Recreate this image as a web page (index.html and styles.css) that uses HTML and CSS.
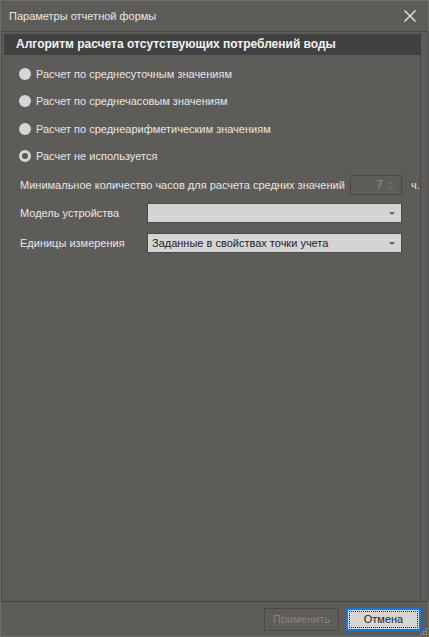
FILE: index.html
```html
<!DOCTYPE html>
<html lang="ru">
<head>
<meta charset="utf-8">
<title>Параметры отчетной формы</title>
<link rel="stylesheet" href="styles.css">
</head>
<body>
<div class="window">
  <div class="titlebar">
    <span class="title">Параметры отчетной формы</span>
    <svg class="close" width="12" height="12" viewBox="0 0 12 12"><path d="M0.5 0.5L11.5 11.5M11.5 0.5L0.5 11.5" stroke="#e8e8e8" stroke-width="1.3" fill="none"/></svg>
  </div>
  <div class="main">
    <div class="content">
      <div class="group">
        <div class="group-head">Алгоритм расчета отсутствующих потреблений воды</div>
        <div class="group-body">
          <label class="radio"><span class="dot"></span>Расчет по среднесуточным значениям</label>
          <label class="radio"><span class="dot"></span>Расчет по среднечасовым значениям</label>
          <label class="radio"><span class="dot"></span>Расчет по среднеарифметическим значениям</label>
          <label class="radio"><span class="dot checked"></span>Расчет не используется</label>
          <div class="row row-min">
            <span class="lbl lbl-min">Минимальное количество часов для расчета средних значений</span>
            <span class="spin"><span class="spin-val">7</span><span class="spin-arrows"><i class="up"></i><i class="down"></i></span></span>
            <span class="unit">ч.</span>
          </div>
          <div class="row">
            <span class="lbl lbl-w">Модель устройства</span>
            <span class="combo"><span class="combo-text"></span><i class="caret"></i></span>
          </div>
          <div class="row">
            <span class="lbl lbl-w">Единицы измерения</span>
            <span class="combo"><span class="combo-text">Заданные в свойствах точки учета</span><i class="caret"></i></span>
          </div>
        </div>
      </div>
    </div>
    <div class="side"></div>
  </div>
  <div class="footer">
    <button class="btn disabled">Применить</button>
    <button class="btn focused"><span class="focus">Отмена</span></button>
    <span class="grip"></span>
  </div>
</div>
</body>
</html>
```

FILE: styles.css
```css
* { box-sizing: border-box; }
html, body { margin: 0; padding: 0; }
body {
  width: 429px;
  height: 637px;
  background: #5e5c59;
  font-family: "Liberation Sans", Arial, sans-serif;
  font-size: 11px;
  color: #e6e6e6;
}
.window {
  width: 429px;
  height: 637px;
  display: flex;
  flex-direction: column;
  border: 1px solid #6f6d6a;
  background: #5e5c59;
}
.titlebar {
  height: 31px;
  flex: none;
  display: flex;
  align-items: center;
  justify-content: space-between;
  padding: 0 12px 0 8px;
  border-bottom: 1px solid #4a4947;
}
.title { color: #e8e8e8; font-size: 11px; }
.close { display: block; }
.main {
  flex: 1;
  display: flex;
  border-bottom: 1px solid #454442;
}
.content {
  flex: 1;
  padding: 2px 0 0 2px;
  border-left: 1px solid #484745;
  border-right: 1px solid #4a4947;
}
.side {
  width: 8px;
  flex: none;
  border-right: 1px solid #545351;
}
.group-head {
  height: 21px;
  background: #414141;
  color: #f2f2f2;
  font-weight: bold;
  font-size: 12px;
  line-height: 21px;
  padding-left: 12px;
  margin-right: -1px;
}
.group-body {
  padding: 5px 0 0 15px;
  display: flex;
  flex-direction: column;
}
.radio {
  height: 27.5px;
  display: flex;
  align-items: center;
  gap: 5px;
  color: #e6e6e6;
}
.dot {
  width: 12px;
  height: 12px;
  border-radius: 50%;
  background: #d6d6d6;
  flex: none;
}
.dot.checked {
  background: #5a5856;
  border: 3px solid #d6d6d6;
}
.row {
  height: 30px;
  display: flex;
  align-items: center;
  padding-left: 1px;
}
.row-min { margin-top: 2px; height: 26px; }
.lbl { color: #e6e6e6; white-space: nowrap; }
.lbl-min { width: 330px; }
.lbl-w { width: 127px; }
.spin {
  width: 52px;
  height: 20px;
  border: 1px solid #494846;
  display: flex;
  align-items: center;
  justify-content: flex-end;
}
.spin-val { color: #8c8c8c; font-size: 12px; margin-right: 5px; }
.spin-arrows {
  width: 10px;
  display: flex;
  flex-direction: column;
  gap: 3px;
  margin-right: 3px;
}
.spin-arrows i {
  display: block;
  width: 0; height: 0;
  border-left: 3px solid transparent;
  border-right: 3px solid transparent;
}
.spin-arrows .up { border-bottom: 3px solid #6e6d6b; }
.spin-arrows .down { border-top: 3px solid #6e6d6b; }
.unit { margin-left: 9px; color: #e6e6e6; }
.combo {
  width: 255px;
  height: 20px;
  background: #d4d4d4;
  border: 1px solid #4a4a4a;
  display: flex;
  align-items: center;
  justify-content: space-between;
  padding: 0 6px 0 4px;
}
.combo-text { color: #1e1e1e; font-size: 11px; }
.caret {
  display: block;
  width: 0; height: 0;
  border-left: 3px solid transparent;
  border-right: 3px solid transparent;
  border-top: 3px solid #6a6a6a;
}
.footer {
  height: 34px;
  flex: none;
  display: flex;
  align-items: center;
  justify-content: flex-end;
  padding-right: 7px;
  gap: 7px;
  position: relative;
}
.btn {
  width: 75px;
  height: 23px;
  font-family: "Liberation Sans", Arial, sans-serif;
  font-size: 11px;
  padding: 0;
  margin: 0;
}
.btn.disabled {
  background: transparent;
  border: 1px solid #4a4947;
  color: #858483;
}
.btn.focused {
  background: #d6d6d6;
  border: 2px solid #1279d8;
  color: #1e1e1e;
  padding: 1px;
}
.focus {
  display: flex;
  align-items: center;
  justify-content: center;
  width: 100%;
  height: 100%;
  border: 1px dotted #222;
}
.grip {
  position: absolute;
  right: 1px;
  bottom: 1px;
  width: 8px;
  height: 8px;
  background:
    radial-gradient(circle, #888 1px, transparent 1.2px) 0 0 / 3px 3px;
  clip-path: polygon(100% 0, 100% 100%, 0 100%);
}
```
